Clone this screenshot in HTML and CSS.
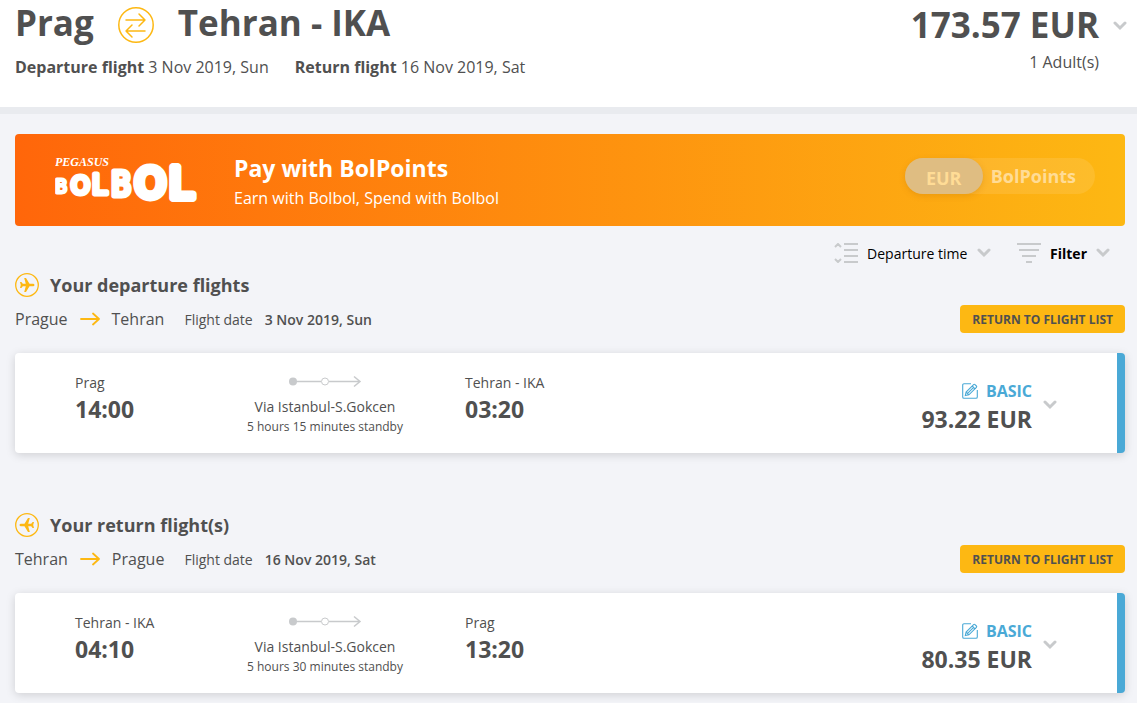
FILE: index.html
```html
<!DOCTYPE html>
<html lang="en">
<head>
    <meta charset="UTF-8">
    <meta name="viewport" content="width=device-width, initial-scale=1.0">
    <title>Prag - Tehran flights</title>
    <link rel="stylesheet" href="styles.css">
</head>
<body>
    <!-- shared icons -->
    <svg class="sprite" aria-hidden="true">
        <symbol id="chevron" viewBox="0 0 14 10">
            <path d="M2 2l5 5 5-5" fill="none" stroke="currentColor" stroke-width="3" stroke-linecap="round"/>
        </symbol>
        <symbol id="arrow" viewBox="0 0 20 14">
            <path d="M1 7h18M13 1.5L19 7l-6 5.500" fill="none" stroke="currentColor" stroke-width="1.800" stroke-linecap="round" stroke-linejoin="round"/>
        </symbol>
        <symbol id="plane" viewBox="0 0 24 24">
            <circle cx="12" cy="12" r="11.300" fill="none" stroke="currentColor" stroke-width="1.300"/>
            <path fill="currentColor" d="M19.500 12c0-.8-.9-1.300-2-1.300h-3L11 5H9.200l1.600 5.700H7.800L6.400 9H5l.8 3-.8 3h1.400l1.400-1.700h3L9.200 19H11l3.500-5.700h3c1.100 0 2-.5 2-1.300z"/>
        </symbol>
        <symbol id="via" viewBox="0 0 73 13">
            <path d="M4 6.500h28M40 6.500h31M65 1.500l6 5-6 5" fill="none" stroke="currentColor" stroke-width="1.500"/>
            <circle cx="4" cy="6.500" r="4" fill="currentColor"/>
            <circle cx="36" cy="6.500" r="3.500" fill="#fff" stroke="currentColor"/>
        </symbol>
        <symbol id="edit" viewBox="0 0 16 16">
            <path d="M9 .7H2A1.300 1.300 0 0 0 .7 2v12A1.300 1.300 0 0 0 2 15.300h12a1.300 1.300 0 0 0 1.300-1.300V7M3.300 12.600l.8-3.600 7.500-7.400a1 1 0 0 1 1.400 0l1.400 1.400a1 1 0 0 1 0 1.400L6.900 11.800zM4.100 9l2.800 2.800M10.200 3l2.800 2.800M5.600 10.400l6-6" fill="none" stroke="currentColor" stroke-width="1.100"/>
        </symbol>
    </svg>

    <header class="header">
        <div class="trip">
            <h1 class="trip-title">
                <span>Prag</span>
                <svg class="swap-icon" viewBox="0 0 36 36" aria-hidden="true">
                    <circle cx="18" cy="18" r="17.200"/>
                    <path d="M8 13h19M21 7l6 6-6 6M27 24H8M14 18l-6 6 6 6"/>
                </svg>
                <span>Tehran - IKA</span>
            </h1>
            <div class="trip-dates">
                <span><strong>Departure flight</strong> 3 Nov 2019, Sun</span>
                <span><strong>Return flight</strong> 16 Nov 2019, Sat</span>
            </div>
        </div>
        <div class="total">
            <div>
                <div class="total-price">173.57 EUR</div>
                <div class="total-pax">1 Adult(s)</div>
            </div>
            <button type="button" class="toggle total-toggle" aria-label="Price details">
                <svg class="chevron"><use href="#chevron"/></svg>
            </button>
        </div>
    </header>

    <main class="content">
        <div class="banner">
            <svg class="logo" viewBox="0 0 146 60" role="img" aria-label="Pegasus BolBol">
                <text class="logo-name" x="0" y="16">PEGASUS</text>
                <text class="logo-b-small" x="0" y="43">B</text>
                <text class="logo-o-small" x="16" y="44">O</text>
                <text class="logo-l-small" x="37" y="44">L</text>
                <text class="logo-b" x="56" y="46">B</text>
                <text class="logo-o" x="80" y="47">O</text>
                <text class="logo-l" x="114" y="48">L</text>
            </svg>
            <div class="banner-text">
                <h2 class="banner-title">Pay with BolPoints</h2>
                <p class="banner-sub">Earn with Bolbol, Spend with Bolbol</p>
            </div>
            <div class="currency">
                <input type="radio" name="currency" id="cur-eur" checked disabled>
                <label class="currency-eur" for="cur-eur">EUR</label>
                <input type="radio" name="currency" id="cur-points" disabled>
                <label class="currency-points" for="cur-points">BolPoints</label>
            </div>
        </div>

        <div class="toolbar">
            <div class="sort">
                <svg class="tool-icon" viewBox="0 0 24 20" aria-hidden="true">
                    <path d="M10 1h14M10 7h14M10 13h14M10 19h14M1 4l3-3 3 3M1 16l3 3 3-3"/>
                </svg>
                <select class="sort-select" aria-label="Sort by">
                    <option>Departure time</option>
                </select>
                <svg class="chevron"><use href="#chevron"/></svg>
            </div>
            <button type="button" class="filter">
                <svg class="tool-icon" viewBox="0 0 24 20" aria-hidden="true">
                    <path d="M0 1h24M2 7h20M5 13h14M9 19h6"/>
                </svg>
                <span>Filter</span>
                <svg class="chevron"><use href="#chevron"/></svg>
            </button>
        </div>

        <section class="flights">
            <h2 class="flights-title">
                <svg class="plane"><use href="#plane"/></svg>
                Your departure flights
            </h2>
            <div class="route">
                <span class="city">Prague</span>
                <svg class="arrow"><use href="#arrow"/></svg>
                <span class="city">Tehran</span>
                <span class="date-label">Flight date</span>
                <strong class="date">3 Nov 2019, Sun</strong>
                <button type="button" class="return-btn">RETURN TO FLIGHT LIST</button>
            </div>
            <div class="card">
                <div class="stop">
                    <div class="port">Prag</div>
                    <div class="time">14:00</div>
                </div>
                <div class="via">
                    <svg class="via-icon"><use href="#via"/></svg>
                    <div class="port">Via Istanbul-S.Gokcen</div>
                    <div class="standby">5 hours 15 minutes standby</div>
                </div>
                <div class="stop arrival">
                    <div class="port">Tehran - IKA</div>
                    <div class="time">03:20</div>
                </div>
                <div class="fare">
                    <div class="fare-type"><svg class="edit"><use href="#edit"/></svg>BASIC</div>
                    <div class="fare-price">93.22 EUR</div>
                </div>
                <button type="button" class="toggle" aria-label="Fare details">
                    <svg class="chevron"><use href="#chevron"/></svg>
                </button>
            </div>
        </section>

        <section class="flights">
            <h2 class="flights-title">
                <svg class="plane plane-back"><use href="#plane"/></svg>
                Your return flight(s)
            </h2>
            <div class="route">
                <span class="city">Tehran</span>
                <svg class="arrow"><use href="#arrow"/></svg>
                <span class="city">Prague</span>
                <span class="date-label">Flight date</span>
                <strong class="date">16 Nov 2019, Sat</strong>
                <button type="button" class="return-btn">RETURN TO FLIGHT LIST</button>
            </div>
            <div class="card">
                <div class="stop">
                    <div class="port">Tehran - IKA</div>
                    <div class="time">04:10</div>
                </div>
                <div class="via">
                    <svg class="via-icon"><use href="#via"/></svg>
                    <div class="port">Via Istanbul-S.Gokcen</div>
                    <div class="standby">5 hours 30 minutes standby</div>
                </div>
                <div class="stop arrival">
                    <div class="port">Prag</div>
                    <div class="time">13:20</div>
                </div>
                <div class="fare">
                    <div class="fare-type"><svg class="edit"><use href="#edit"/></svg>BASIC</div>
                    <div class="fare-price">80.35 EUR</div>
                </div>
                <button type="button" class="toggle" aria-label="Fare details">
                    <svg class="chevron"><use href="#chevron"/></svg>
                </button>
            </div>
        </section>
    </main>
</body>
</html>
```
FILE: styles.css
```css
* {
    box-sizing: border-box;
}
body {
    margin: 0;
    background-color: #f3f4f8;
    color: #505050;
    font-family: "Open Sans", "Noto Sans", sans-serif;
    font-size: 14px;
    line-height: 20px;
}
h1, h2, p {
    margin: 0;
}
button, select {
    border: none;
    background: none;
    padding: 0;
    font-family: inherit;
    cursor: pointer;
}
svg {
    display: block;
    flex-shrink: 0;
}
.sprite {
    position: absolute;
    width: 0;
    height: 0;
}
.chevron {
    width: 14px;
    height: 10px;
    color: #c8cacc;
}

/* header */
.header {
    display: flex;
    justify-content: space-between;
    padding: 0 10px 28px 15px;
    background-color: #fff;
    border-bottom: 7px solid #e9ebef;
}
.trip-title {
    display: flex;
    align-items: center;
    gap: 24px;
    font-size: 35px;
    line-height: 46px;
}
.swap-icon {
    width: 36px;
    height: 36px;
    margin-top: 4px;
    fill: none;
    stroke: #fdb813;
    stroke-width: 1.5;
    stroke-linecap: round;
    stroke-linejoin: round;
}
.trip-dates {
    display: flex;
    gap: 26px;
    margin-top: 9px;
    font-size: 16px;
    line-height: 24px;
}
.total {
    display: flex;
    align-items: flex-start;
    gap: 14px;
    text-align: right;
}
.total-price {
    font-size: 35px;
    font-weight: bold;
    line-height: 50px;
}
.total-pax {
    font-size: 16px;
    line-height: 24px;
}
.total-toggle {
    margin-top: 21px;
}

/* banner */
.content {
    padding: 20px 12px 10px 15px;
}
.banner {
    display: flex;
    align-items: center;
    height: 92px;
    padding: 0 30px 0 40px;
    border-radius: 4px;
    background: linear-gradient(90deg, #ff660a, #fdb813);
    color: #fff;
}
.logo {
    width: 146px;
    height: 60px;
    margin-right: 33px;
    fill: #fff;
    stroke: #fff;
    stroke-linejoin: round;
    font-family: "DejaVu Sans", sans-serif;
}
.logo-name {
    font-family: "Liberation Serif", serif;
    font-size: 12px;
    font-style: italic;
    font-weight: bold;
    stroke: none;
}
.logo-b-small {
    font-family: "DejaVu Sans Condensed", "DejaVu Sans", sans-serif;
    font-size: 20px;
    stroke-width: 3;
}
.logo-o-small {
    font-size: 24px;
    stroke-width: 5;
}
.logo-l-small {
    font-size: 27px;
    stroke-width: 5;
}
.logo-b {
    font-family: "DejaVu Sans Condensed", "DejaVu Sans", sans-serif;
    font-size: 33px;
    stroke-width: 5;
}
.logo-o {
    font-size: 39px;
    stroke-width: 8;
}
.logo-l {
    font-size: 43px;
    stroke-width: 8;
}
.banner-text {
    padding-top: 2px;
}
.banner-title {
    font-size: 23px;
    line-height: 32px;
}
.banner-sub {
    margin-top: 2px;
    font-size: 16px;
    line-height: 24px;
}
.currency {
    display: flex;
    align-items: center;
    height: 36px;
    margin-left: auto;
    margin-bottom: 8px;
    padding-right: 19px;
    border-radius: 18px;
    background-color: rgba(255, 255, 255, 0.1);
    color: #ffdc96;
    font-size: 18px;
    font-weight: bold;
}
.currency input {
    position: absolute;
    opacity: 0;
}
.currency-eur {
    height: 36px;
    width: 78px;
    margin-right: 8px;
    padding-top: 2px;
    border-radius: 18px;
    background-color: #dfbd82;
    box-shadow: 0 2px 6px rgba(160, 90, 0, 0.2);
    line-height: 36px;
    text-align: center;
}

/* sort and filter */
.toolbar {
    display: flex;
    justify-content: flex-end;
    gap: 26px;
    height: 28px;
    margin-top: 13px;
    padding-right: 15px;
}
.sort, .filter {
    display: flex;
    align-items: center;
    gap: 9px;
    color: #000;
    font-size: 14px;
    line-height: 20px;
}
.filter {
    font-weight: bold;
}
.sort-select {
    appearance: none;
    padding-top: 2px;
    color: #000;
    font-size: 14px;
    line-height: 20px;
}
.filter span {
    padding-top: 2px;
}
.tool-icon {
    width: 24px;
    height: 20px;
    fill: none;
    stroke: #c8cacc;
    stroke-width: 2;
}

/* flight list */
.flights {
    margin-top: 6px;
}
.flights + .flights {
    margin-top: 60px;
}
.flights-title {
    display: flex;
    align-items: center;
    gap: 11px;
    font-size: 18px;
    line-height: 24px;
}
.plane {
    width: 24px;
    height: 24px;
    color: #fdb813;
}
.plane-back {
    transform: rotate(180deg);
}
.route {
    display: flex;
    align-items: center;
    gap: 12px;
    margin-top: 8px;
}
.city {
    font-size: 16px;
}
.arrow {
    width: 20px;
    height: 14px;
    color: #fdb813;
}
.date-label, .date {
    padding-top: 2px;
}
.date-label {
    margin-left: 8px;
}
.date {
    font-weight: 600;
}
.return-btn {
    height: 28px;
    margin-left: auto;
    padding: 0 12px;
    border-radius: 4px;
    background-color: #fdb813;
    color: #505050;
    font-size: 12px;
    font-weight: bold;
}
.card {
    display: grid;
    grid-template-columns: 160px 180px 1fr auto auto;
    height: 100px;
    margin-top: 20px;
    padding: 20px 60px 0;
    border-right: 8px solid #4aa9d6;
    border-radius: 4px;
    background-color: #fff;
    box-shadow: 0 2px 10px rgba(0, 0, 0, 0.15);
}
.time, .fare-price {
    font-size: 23px;
    font-weight: bold;
    line-height: 32px;
}
.via {
    padding-top: 2px;
    text-align: center;
}
.via-icon {
    width: 73px;
    height: 13px;
    margin: 0 auto 9px;
    color: #c8cacc;
}
.standby {
    font-size: 12px;
}
.arrival {
    padding-left: 50px;
}
.fare {
    padding-top: 6px;
    text-align: right;
}
.fare-type {
    display: flex;
    align-items: center;
    justify-content: flex-end;
    gap: 8px;
    color: #4aa9d6;
    font-size: 16px;
    font-weight: bold;
    line-height: 24px;
}
.edit {
    width: 16px;
    height: 16px;
}
.card .toggle {
    align-self: start;
    margin: 27px 0 0 11px;
}
```
